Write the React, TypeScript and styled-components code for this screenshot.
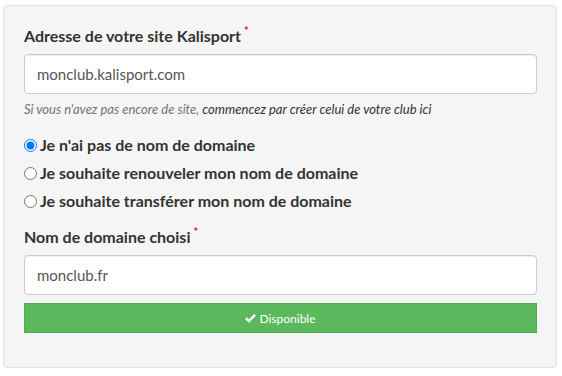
import React, {useState} from "react"
import styled, {createGlobalStyle} from "styled-components"

const GlobalStyle = createGlobalStyle`
    html, body {
        margin: 0;
        background: #fff;
    }
    body {
        padding: 5px 5px 0 3px;
        font-family: Lato, "Open Sans", sans-serif;
        color: #333;
    }
`

const Well = styled.div`
    background: #f5f5f5;
    border: 1px solid #e3e3e3;
    border-radius: 4px;
    padding: 19px 19px 34px 20px;
    height: 363px;
    box-sizing: border-box;
`

const FieldLabel = styled.label`
    display: block;
    font-size: 16px;
    font-weight: 700;
    line-height: 22px;
    margin: 0 0 7px 0;
`

const Required = styled.span`
    color: #e02020;
    font-size: 11px;
    vertical-align: top;
    position: relative;
    top: -5px;
    margin-left: 3px;
`

const TextInput = styled.input`
    display: block;
    width: 100%;
    box-sizing: border-box;
    height: 40px;
    padding: 0 12px;
    font-family: Lato, sans-serif;
    font-size: 15px;
    color: #555;
    background: #fff;
    border: 1px solid #ccc;
    border-radius: 4px;
    box-shadow: inset 0 1px 1px rgba(0, 0, 0, 0.075);
    outline: none;
`

const Help = styled.p`
    margin: 6px 0 16px;
    font-size: 13px;
    font-style: italic;
    color: #737373;
    line-height: 18px;
`

const HelpLink = styled.a`
    color: #333;
    text-decoration: none;
`

const RadioList = styled.div`
    display: flex;
    flex-direction: column;
    gap: 6px;
    margin-bottom: 14px;
`

const RadioRow = styled.label`
    display: flex;
    align-items: center;
    font-size: 16px;
    font-weight: 700;
    line-height: 22px;
    cursor: pointer;
`

const Radio = styled.input`
    margin: 0 3px 0 0;
    width: 13px;
    height: 13px;
`

const Status = styled.div`
    margin-top: 8px;
    height: 30px;
    background: #5cb85c;
    border: 1px solid #4cae4c;
    box-sizing: border-box;
    color: #fff;
    font-size: 12px;
    display: flex;
    align-items: center;
    justify-content: center;
    gap: 3px;
`

const options = [
    "Je n'ai pas de nom de domaine",
    "Je souhaite renouveler mon nom de domaine",
    "Je souhaite transférer mon nom de domaine",
]

export default function App() {
    const [choice, setChoice] = useState(0)
    return (
        <>
            <GlobalStyle />
            <Well>
                <FieldLabel>
                    Adresse de votre site Kalisport<Required>*</Required>
                </FieldLabel>
                <TextInput defaultValue="monclub.kalisport.com" />
                <Help>
                    Si vous n'avez pas encore de site,{" "}
                    <HelpLink href="#">commencez par créer celui de votre club ici</HelpLink>
                </Help>
                <RadioList>
                    {options.map((o, i) => (
                        <RadioRow key={o}>
                            <Radio
                                type="radio"
                                name="domain"
                                checked={choice === i}
                                onChange={() => setChoice(i)}
                            />
                            {o}
                        </RadioRow>
                    ))}
                </RadioList>
                <FieldLabel>
                    Nom de domaine choisi<Required>*</Required>
                </FieldLabel>
                <TextInput defaultValue="monclub.fr" />
                <Status>
                    <svg width="11" height="10" viewBox="0 0 12 10">
                        <path d="M1 5.2 L4.2 8.3 L11 1.6" stroke="#fff" strokeWidth="2.6" fill="none" />
                    </svg>
                    Disponible
                </Status>
            </Well>
        </>
    )
}
